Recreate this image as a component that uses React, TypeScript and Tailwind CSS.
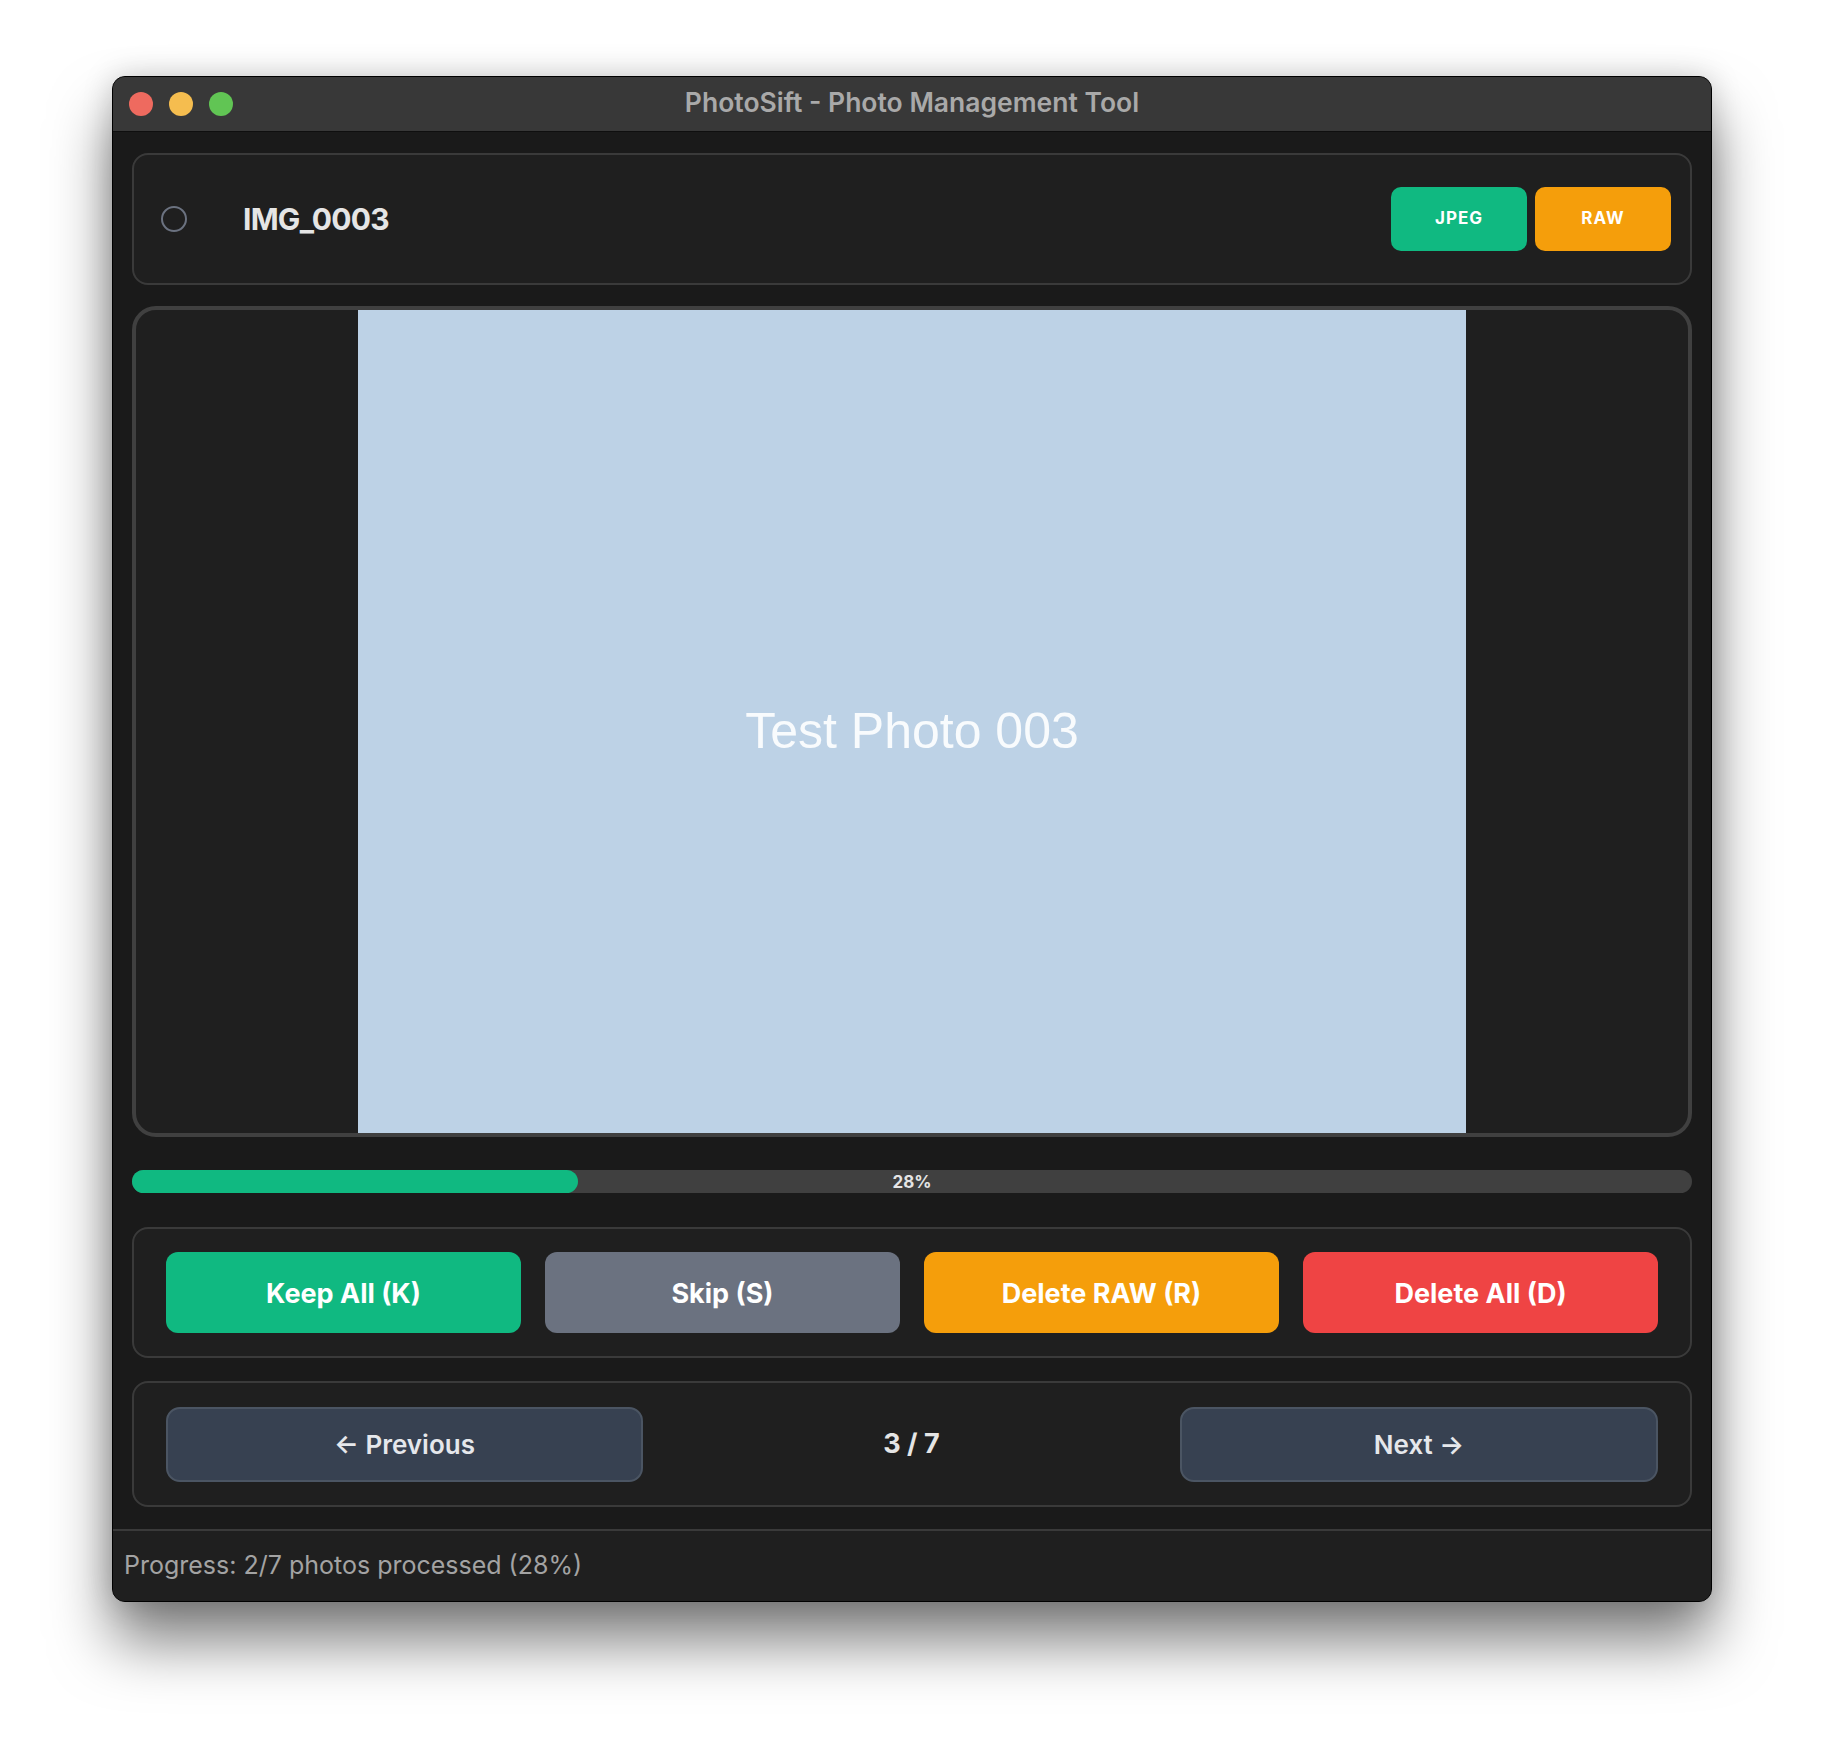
import React from "react";

const ACTIONS: { label: string; color: string }[] = [
  { label: "Keep All (K)", color: "bg-[#10b981]" },
  { label: "Skip (S)", color: "bg-[#6b7280]" },
  { label: "Delete RAW (R)", color: "bg-[#f59e0b]" },
  { label: "Delete All (D)", color: "bg-[#ef4444]" },
];

const progress = 2 / 7;

function TitleBar() {
  return (
    <div className="grid h-[55px] grid-cols-[1fr_auto_1fr] items-center border-b border-[#0f0f0f] bg-[#383838]">
      <div className="flex items-center gap-[16px] pl-[16px]">
        <span className="h-[24px] w-[24px] rounded-full bg-[#ee6a5f]" />
        <span className="h-[24px] w-[24px] rounded-full bg-[#f5bd4f]" />
        <span className="h-[24px] w-[24px] rounded-full bg-[#61c554]" />
      </div>
      <div className="-mt-[3px] text-[26.5px] font-semibold text-[#a9a9a9]">
        PhotoSift - Photo Management Tool
      </div>
      <div />
    </div>
  );
}

export default function App() {
  return (
    <div
      className="flex min-h-[1750px] justify-center bg-white pt-[76px]"
      style={{ fontFamily: "Inter, 'Noto Sans', sans-serif" }}
    >
      <div className="h-fit w-[1600px] overflow-hidden rounded-[13px] border border-black bg-[#1a1a1a] shadow-[0_40px_60px_rgba(0,0,0,0.5),0_0_30px_rgba(0,0,0,0.18)]">
        <TitleBar />

        <div className="flex flex-col px-[19px] pb-[22px] pt-[21px]">
          {/* header */}
          <div className="flex h-[132px] items-center rounded-[16px] border-2 border-[#3a3a3a] bg-[#1f1f1f] pl-[27px] pr-[19px]">
            <span className="h-[26px] w-[26px] rounded-full border-2 border-[#6b7280]" />
            <span className="ml-[56px] text-[30px] font-bold tracking-tight text-[#e5e5e5]">
              IMG_0003
            </span>
            <div className="ml-auto flex gap-[8px]">
              <span className="flex h-[64px] w-[136px] items-center justify-center rounded-[10px] bg-[#10b981] text-[17px] font-bold tracking-[0.06em] text-white">
                JPEG
              </span>
              <span className="flex h-[64px] w-[136px] items-center justify-center rounded-[10px] bg-[#f59e0b] text-[17px] font-bold tracking-[0.06em] text-white">
                RAW
              </span>
            </div>
          </div>

          {/* photo */}
          <div className="mt-[21px] flex h-[831px] justify-center rounded-[24px] border-4 border-[#404040] bg-[#1f1f1f]">
            <div className="flex h-full w-[1108px] items-center justify-center bg-[#bdd2e6]">
              <span
                className="mt-[20px] text-[50px] text-white/90"
                style={{ fontFamily: "'Liberation Sans', Arial, sans-serif" }}
              >
                Test Photo 003
              </span>
            </div>
          </div>

          {/* progress */}
          <div className="relative mt-[33px] h-[23px] rounded-full bg-[#404040]">
            <div
              className="h-full rounded-full bg-[#10b981]"
              style={{ width: `${progress * 100}%` }}
            />
            <span className="absolute inset-0 flex items-center justify-center pt-[2px] text-[17px] font-bold text-[#e5e5e5]">
              28%
            </span>
          </div>

          {/* actions */}
          <div className="mt-[34px] grid grid-cols-4 gap-[24px] rounded-[16px] border-2 border-[#3a3a3a] bg-[#1f1f1f] px-[32px] py-[23px]">
            {ACTIONS.map((a) => (
              <button
                key={a.label}
                className={`flex h-[81px] items-center justify-center rounded-[12px] pt-[3px] text-[27px] font-bold text-white ${a.color}`}
              >
                {a.label}
              </button>
            ))}
          </div>

          {/* navigation */}
          <div className="mt-[23px] grid grid-cols-[477px_1fr_478px] items-center rounded-[16px] border-2 border-[#3a3a3a] bg-[#1f1f1f] px-[32px] pb-[23px] pt-[24px]">
            <button className="flex h-[75px] items-center justify-center rounded-[14px] border-2 border-[#4b5563] bg-[#374151] text-[26px] font-semibold text-[#e5e7eb]">
              ← Previous
            </button>
            <div className="text-center text-[27px] font-bold text-[#e5e5e5]">
              3 / 7
            </div>
            <button className="flex h-[75px] items-center justify-center rounded-[14px] border-2 border-[#4b5563] bg-[#374151] text-[26px] font-semibold text-[#e5e7eb]">
              Next →
            </button>
          </div>
        </div>

        {/* status bar */}
        <div className="flex h-[72px] items-center border-t-2 border-[#3a3a3a] bg-[#1f1f1f] px-[11px]">
          <span className="text-[25px] text-[#a3a3a3]">
            Progress: 2/7 photos processed (28%)
          </span>
        </div>
      </div>
    </div>
  );
}
